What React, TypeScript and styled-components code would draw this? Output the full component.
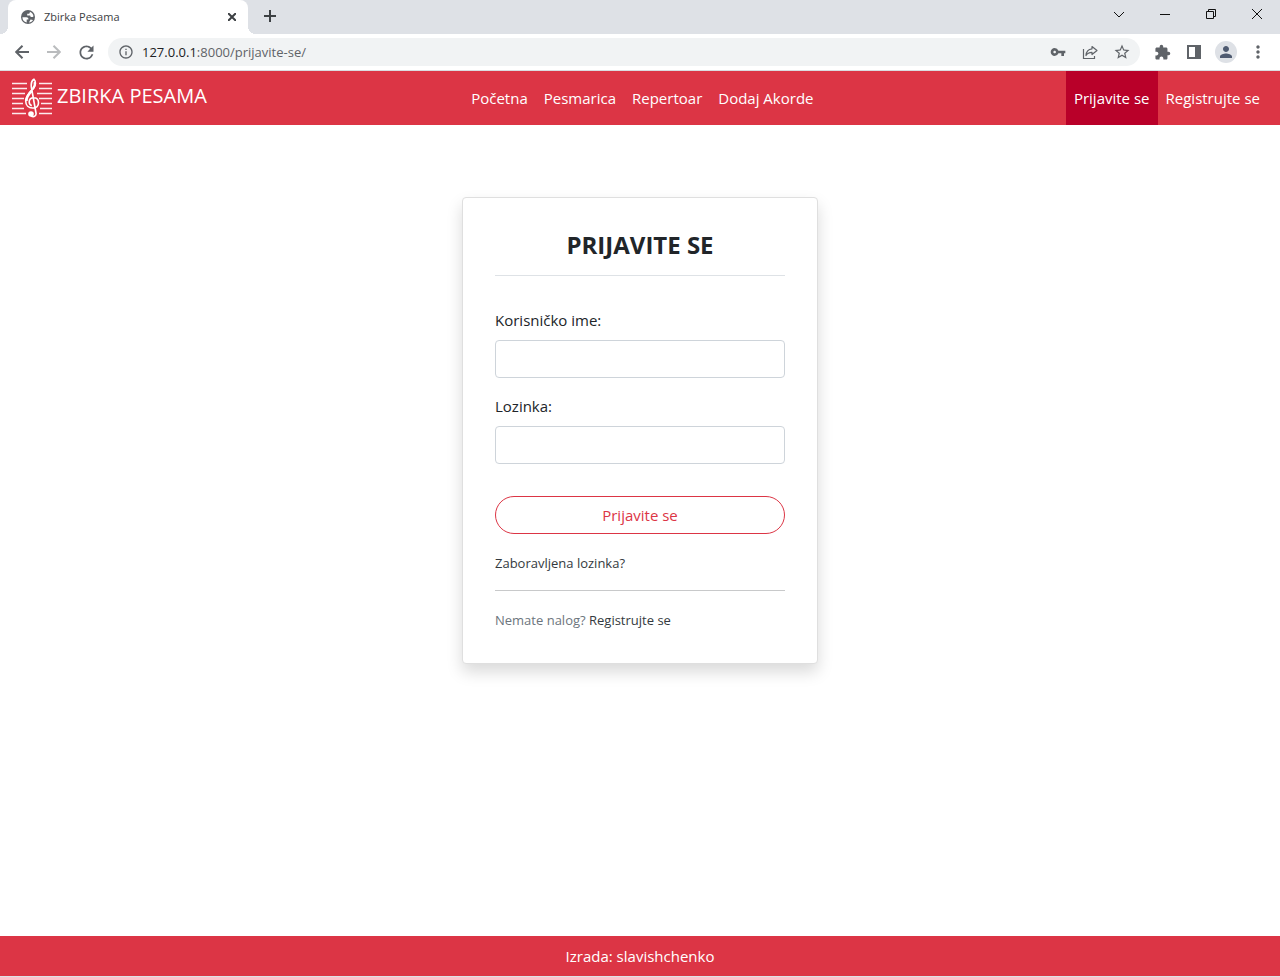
import React from "react";
import styled, { createGlobalStyle } from "styled-components";
import {
  MdExtension,
  MdInfoOutline,
  MdMoreVert,
  MdPerson,
  MdRefresh,
  MdStarBorder,
  MdVpnKey,
} from "react-icons/md";

const red = "#dc3545";

const GlobalStyle = createGlobalStyle`
  *, *::before, *::after { box-sizing: border-box; }
  body {
    margin: 0;
    background: #fff;
    color: #212529;
    font-family: "Open Sans", "Noto Sans", sans-serif;
    font-size: 15px;
    line-height: 24px;
  }
  a { color: inherit; text-decoration: none; }
  button, input { font: inherit; }
  svg { display: block; flex: none; }
`;

const Window = styled.div`
  display: flex;
  flex-direction: column;
  min-height: 100vh;
  border-bottom: 1px solid #dee1e6;
`;

const TabStrip = styled.div`
  display: flex;
  height: 34px;
  padding-left: 8px;
  background: #dee1e6;
`;

const Tab = styled.div`
  position: relative;
  display: flex;
  align-items: center;
  width: 240px;
  padding: 0 8px 0 12px;
  background: #fff;
  border-radius: 8px 8px 0 0;
  color: #3c4043;
  font-size: 11px;

  &::before,
  &::after {
    content: "";
    position: absolute;
    bottom: 0;
    width: 8px;
    height: 8px;
  }
  &::before {
    right: 100%;
    background: radial-gradient(circle at 0 0, transparent 8px, #fff 8px);
  }
  &::after {
    left: 100%;
    background: radial-gradient(circle at 100% 0, transparent 8px, #fff 8px);
  }
`;

const TabTitle = styled.span`
  flex: 1;
  padding-left: 8px;
`;

const IconButton = styled.button<{ $size?: number; $color?: string }>`
  display: flex;
  align-items: center;
  justify-content: center;
  width: ${(p) => p.$size ?? 32}px;
  height: ${(p) => p.$size ?? 32}px;
  padding: 0;
  border: 0;
  background: none;
  color: ${(p) => p.$color ?? "#5f6368"};
`;

const NewTab = styled(IconButton)`
  margin-left: 6px;
`;

const WindowControls = styled.div`
  display: flex;
  margin-left: auto;
`;

const WindowButton = styled(IconButton)`
  width: 46px;
  height: 28px;
`;

const Toolbar = styled.div`
  display: flex;
  align-items: center;
  height: 37px;
  padding: 0 6px;
  border-bottom: 1px solid #dadce0;
`;

const AddressBar = styled.div`
  display: flex;
  flex: 1;
  align-items: center;
  height: 28px;
  margin: 0 6px;
  padding: 0 2px 0 10px;
  border-radius: 14px;
  background: #f1f3f4;
`;

const Address = styled.input`
  grid-area: 1 / 1;
  width: 100%;
  padding: 0;
  border: 0;
  background: none;
  color: transparent;
  outline: none;
`;

const AddressText = styled.span`
  grid-area: 1 / 1;
  color: #5f6368;
  pointer-events: none;

  b { color: #202124; font-weight: 400; }
`;

const AddressField = styled.div`
  display: grid;
  flex: 1;
  padding-left: 8px;
  font-size: 13px;
`;

const Avatar = styled.span`
  display: grid;
  place-items: center;
  width: 22px;
  height: 22px;
  border-radius: 50%;
  background: #dee1e6;
  color: #4e5a70;
`;

const Header = styled.header`
  display: flex;
  align-items: center;
  justify-content: space-between;
  padding: 0 12px;
  background: ${red};
  color: #fff;
`;

const Brand = styled.a`
  display: flex;
  align-items: center;
  margin-right: 12px;
  gap: 5px;
  font-size: 20px;
`;

const BrandName = styled.span`
  padding-bottom: 4px;
`;

const Nav = styled.nav`
  display: flex;
`;

const NavLink = styled.a<{ $active?: boolean }>`
  padding: 15px 8px;
  background: ${(p) => (p.$active ? "#b90029" : "transparent")};
`;

const Main = styled.main`
  flex: 1;
  padding: 72px 16px;
`;

const Card = styled.form`
  max-width: 356px;
  margin: 0 auto;
  padding: 32px;
  border: 1px solid #dfdfdf;
  border-radius: 4px;
  background: #fff;
  box-shadow: 0 8px 16px rgba(0, 0, 0, 0.15);
`;

const Title = styled.h1`
  margin: 0 0 32px;
  padding-bottom: 16px;
  border-bottom: 1px solid #dee2e6;
  font-size: 24px;
  font-weight: 700;
  line-height: 29px;
  text-align: center;
`;

const Field = styled.div`
  margin-bottom: 16px;
`;

const Label = styled.label`
  display: block;
  margin-bottom: 8px;
`;

const TextInput = styled.input`
  display: block;
  width: 100%;
  height: 38px;
  padding: 6px 12px;
  border: 1px solid #ced4da;
  border-radius: 4px;
  background: #fff;
`;

const Submit = styled.button`
  width: 100%;
  height: 38px;
  margin: 16px 0 18px;
  border: 1px solid ${red};
  border-radius: 19px;
  background: none;
  color: ${red};
`;

const Note = styled.p`
  margin: 0;
  color: #6c757d;
  font-size: 13px;
  line-height: 22px;

  a { color: #343a40; }
`;

const Divider = styled.hr`
  margin: 16px 0 18px;
  border: 0;
  border-top: 1px solid #c8c9ca;
`;

const Footer = styled.footer`
  padding: 8px;
  background: ${red};
  color: #fff;
  text-align: center;
`;

const LineIcon = ({ size, d }: { size: number; d: string }) => (
  <svg
    width={size}
    height={size}
    viewBox={`0 0 ${size} ${size}`}
    fill="none"
    stroke="currentColor"
    strokeWidth="2"
    aria-hidden="true"
  >
    <path d={d} />
  </svg>
);

const Globe = () => (
  <svg width="16" height="16" viewBox="0 0 16 16" aria-hidden="true">
    <circle cx="8" cy="8" r="7" fill="#5f6368" />
    <path
      d="M2.400 8.200h4c1.400 0 2 .8 2 1.800v.6H6.700v2.800A5.600 5.600 0 0 1 2.400 8.200z"
      fill="#fff"
    />
    <path
      d="M9.800 2.700A5.600 5.600 0 0 1 13.500 7.200c-.5.700-1.200.8-2 .8-1 0-1.300-.8-1.300-1.600H7.200V4.700h1.600c.7 0 1-.6 1-1.100z"
      fill="#fff"
    />
    <path d="M9 13.600c1.800-.2 3.200-1.200 4-2.600l-2.500-.6z" fill="#fff" />
  </svg>
);

const Logo = () => (
  <svg width="40" height="40" viewBox="0 0 40 40" fill="none" stroke="#fff" aria-hidden="true">
    <path
      d="M0 5.500h15M27 5.500h13M0 10.500h15M27 10.500h13M0 15.500h13M25 15.500h15M0 20.500h12M27 20.500h13M0 25.500h11M29 25.500h11M0 30.500h12M28 30.500h12M0 35.500h14M27 35.500h13"
      strokeWidth="1.300"
      opacity="0.9"
    />
    <path
      d="M19 38c3 1.500 5.500 0 5-3L19.500 10c-.7-4 .4-7.500 2.500-8.700 2 2 2 6-.5 9.200-2.800 3.500-7.800 7-7.800 12.500 0 4.500 3 7 6.800 7s6-2.200 6-5.300-2-5-4.800-5-4.500 2-4.500 4.400c0 1.800 1 3 2.600 3.600"
      strokeWidth="1.600"
    />
    <path d="M20 12.500c-3 3-5.600 6-5.600 10.500" strokeWidth="2.600" />
    <path d="M22.600 4c.6 2.400 0 4.600-1.800 6.800" strokeWidth="2" />
    <circle cx="19" cy="36" r="2.800" fill="#fff" stroke="none" />
  </svg>
);

const Share = () => (
  <svg width="16" height="16" viewBox="0 0 16 16" fill="none" stroke="#5f6368" strokeWidth="1.200" aria-hidden="true">
    <path d="M1.500 5v9.500h11V12" />
    <path d="M10 2.500 15 6.500l-5 4V8.300C7 8.300 5.200 9.300 4 11.500c.2-4 2.500-6.300 6-6.700z" strokeLinejoin="round" />
  </svg>
);

const SidePanel = () => (
  <svg width="14" height="14" viewBox="0 0 14 14" aria-hidden="true">
    <path d="M0 0h14v14H0zM2 2v10h6V2z" fill="#5f6368" fillRule="evenodd" />
  </svg>
);

const controls = [
  { label: "Search tabs", d: "M1 4l5 5 5-5" },
  { label: "Minimize", d: "M1 6.500h10" },
  { label: "Restore", d: "M1.500 3.500h7v7h-7zM3.500 3.500v-2h7v7h-2" },
  { label: "Close", d: "M1 1l10 10M11 1L1 11" },
];

const pages = ["Početna", "Pesmarica", "Repertoar", "Dodaj Akorde"];

export default function App() {
  return (
    <Window>
      <GlobalStyle />
      <TabStrip>
        <Tab>
          <Globe />
          <TabTitle>Zbirka Pesama</TabTitle>
          <IconButton $size={16} $color="#3c4043" aria-label="Close tab">
            <LineIcon size={8} d="M0 0l8 8M8 0L0 8" />
          </IconButton>
        </Tab>
        <NewTab $color="#3c4043" aria-label="New tab">
          <LineIcon size={12} d="M6 0v12M0 6h12" />
        </NewTab>
        <WindowControls>
          {controls.map((c) => (
            <WindowButton key={c.label} $color="#111" aria-label={c.label}>
              <svg width="12" height="12" viewBox="0 0 12 12" fill="none" stroke="currentColor">
                <path d={c.d} />
              </svg>
            </WindowButton>
          ))}
        </WindowControls>
      </TabStrip>
      <Toolbar>
        <IconButton aria-label="Back">
          <LineIcon size={14} d="M14 7H1M7.500 .7L1.200 7l6.300 6.300" />
        </IconButton>
        <IconButton $color="#babcbe" aria-label="Forward">
          <LineIcon size={14} d="M0 7h13M6.500 .7L12.800 7l-6.300 6.300" />
        </IconButton>
        <IconButton aria-label="Reload"><MdRefresh size={21} /></IconButton>
        <AddressBar>
          <MdInfoOutline size={16} color="#5f6368" />
          <AddressField>
            <Address aria-label="Address" />
            <AddressText><b>127.0.0.1</b>:8000/prijavite-se/</AddressText>
          </AddressField>
          <IconButton aria-label="Passwords"><MdVpnKey size={16} /></IconButton>
          <IconButton aria-label="Share"><Share /></IconButton>
          <IconButton aria-label="Bookmark"><MdStarBorder size={18} /></IconButton>
        </AddressBar>
        <IconButton aria-label="Extensions"><MdExtension size={17} /></IconButton>
        <IconButton aria-label="Side panel"><SidePanel /></IconButton>
        <IconButton aria-label="Profile"><Avatar><MdPerson size={18} /></Avatar></IconButton>
        <IconButton aria-label="Menu"><MdMoreVert size={20} /></IconButton>
      </Toolbar>
      <Header>
        <Brand href="#">
          <Logo />
          <BrandName>ZBIRKA PESAMA</BrandName>
        </Brand>
        <Nav>
          {pages.map((p) => (
            <NavLink key={p} href="#">{p}</NavLink>
          ))}
        </Nav>
        <Nav>
          <NavLink href="#" $active>Prijavite se</NavLink>
          <NavLink href="#">Registrujte se</NavLink>
        </Nav>
      </Header>
      <Main>
        <Card onSubmit={(e: React.FormEvent) => e.preventDefault()}>
          <Title>PRIJAVITE SE</Title>
          <Field>
            <Label htmlFor="username">Korisničko ime:</Label>
            <TextInput id="username" type="text" />
          </Field>
          <Field>
            <Label htmlFor="password">Lozinka:</Label>
            <TextInput id="password" type="password" />
          </Field>
          <Submit type="submit">Prijavite se</Submit>
          <Note><a href="#">Zaboravljena lozinka?</a></Note>
          <Divider />
          <Note>Nemate nalog? <a href="#">Registrujte se</a></Note>
        </Card>
      </Main>
      <Footer>Izrada: slavishchenko</Footer>
    </Window>
  );
}
